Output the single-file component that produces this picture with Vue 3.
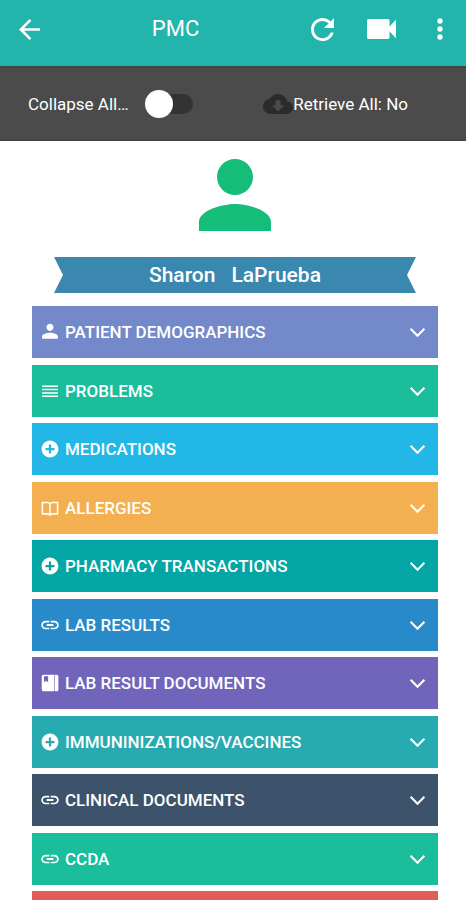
<template>
  <div class="page">
    <header class="app-bar">
      <button class="icon-button" type="button" aria-label="Back">
        <svg class="icon-nav" viewBox="4 4 16 16"><path d="M20 11H7.83l5.59-5.59L12 4l-8 8 8 8 1.41-1.41L7.83 13H20v-2z" /></svg>
      </button>
      <h1 class="app-title">PMC</h1>
      <div class="app-actions">
        <button class="icon-button" type="button" aria-label="Refresh">
          <svg class="icon-refresh" viewBox="4 4 16 16"><path d="M17.65 6.35C16.2 4.9 14.21 4 12 4c-4.42 0-7.99 3.58-7.99 8s3.57 8 7.99 8c3.73 0 6.84-2.55 7.73-6h-2.08c-.82 2.33-3.04 4-5.65 4-3.31 0-6-2.69-6-6s2.69-6 6-6c1.66 0 3.14.69 4.22 1.78L13 11h7V4l-2.35 2.35z" /></svg>
        </button>
        <button class="icon-button" type="button" aria-label="Video call">
          <svg class="icon-video" viewBox="3 6 18 12" preserveAspectRatio="none"><path d="M17 10.5V7c0-.55-.45-1-1-1H4c-.55 0-1 .45-1 1v10c0 .55.45 1 1 1h12c.55 0 1-.45 1-1v-3.500l4 4v-11l-4 4z" /></svg>
        </button>
        <button class="icon-button" type="button" aria-label="More options">
          <svg class="icon-more" viewBox="0 0 6 22"><circle cx="3" cy="3" r="2.700" /><circle cx="3" cy="11" r="2.700" /><circle cx="3" cy="19" r="2.700" /></svg>
        </button>
      </div>
    </header>

    <div class="tool-bar">
      <label class="collapse-toggle" for="collapse-all">
        <span>Collapse All…</span>
        <input id="collapse-all" v-model="collapsed" class="switch" type="checkbox" />
      </label>
      <button class="retrieve-button" type="button">
        <svg class="icon-cloud" viewBox="0 4 24 16"><path d="M19.350 10.040C18.670 6.590 15.640 4 12 4 9.110 4 6.600 5.640 5.350 8.040 2.340 8.360 0 10.910 0 14c0 3.310 2.690 6 6 6h13c2.760 0 5-2.240 5-5 0-2.640-2.050-4.780-4.650-4.960z" /><path class="cloud-arrow" d="M17 13l-5 5-5-5h3V9h4v4h3z" /></svg>
        <span>Retrieve All: No</span>
      </button>
    </div>

    <main class="content">
      <svg class="avatar" viewBox="4 4 16 16"><path d="M12 12c2.210 0 4-1.790 4-4s-1.790-4-4-4-4 1.790-4 4 1.790 4 4 4zm0 2c-2.670 0-8 1.340-8 4v2h16v-2c0-2.660-5.330-4-8-4z" /></svg>
      <h2 class="ribbon">
        <span>Sharon</span>
        <span>LaPrueba</span>
      </h2>

      <div class="sections">
        <button
          v-for="section in sections"
          :key="section.title"
          :class="['section', section.color]"
          :aria-label="section.title || 'More'"
          type="button"
        >
          <svg class="section-icon" viewBox="0 0 24 24"><path :d="icons[section.icon]" /></svg>
          <span class="section-title">{{ section.title }}</span>
          <svg class="chevron" viewBox="0 0 16 10"><path d="M1.500 1.500L8 8l6.500-6.500" /></svg>
        </button>
      </div>
    </main>
  </div>
</template>

<script setup>
import { ref } from 'vue'

const collapsed = ref(false)

const icons = {
  person: 'M12 10.500c2.600 0 4.700-2.100 4.700-4.700S14.600 1 12 1 7.300 3.200 7.300 5.800s2.100 4.700 4.700 4.700zm0 2.500c-3.700 0-10.500 1.600-10.500 5v3h21v-3c0-3.400-6.800-5-10.500-5z',
  lines: 'M1.500 4.500h21v2h-21zM1.500 9h21v2h-21zM1.500 13.500h21v2h-21zM1.500 18h21v2h-21z',
  plus: 'M12 .8C5.800.8.8 5.800.8 12s5 11.200 11.200 11.200 11.200-5 11.200-11.200S18.200.8 12 .8zm6 12.700h-4.500V18h-3v-4.500H6v-3h4.500V6h3v4.500H18v3z',
  book: 'M21.500 3.500h-7L12 5 9.500 3.500h-7C1.500 3.500.8 4.200.8 5.200v14c0 1 .7 1.700 1.700 1.700h7L12 22.500l2.500-1.600h7c1 0 1.700-.7 1.700-1.700v-14c0-1-.7-1.700-1.700-1.700zM11 19.500l-1.500-.7H2.900V5.500h6.300L11 6.700v12.800zm10.100-.7h-6.600l-1.500.7V6.700l1.800-1.200h6.300v13.300z',
  link: 'M2.600 12c0-2 1.600-3.500 3.600-3.500H11V6.200H6.200C3 6.200.3 8.800.3 12S3 17.800 6.200 17.800H11v-2.300H6.200c-2 0-3.600-1.500-3.600-3.500zM7.500 13.200h9v-2.400h-9v2.400zM17.800 6.200H13v2.300h4.800c2 0 3.600 1.500 3.600 3.500s-1.600 3.500-3.600 3.500H13v2.300h4.800c3.200 0 5.900-2.600 5.900-5.800s-2.700-5.800-5.900-5.800z',
  album: 'M3.500 1h14v22h-14C2 23 1 22 1 20.500v-17C1 2 2 1 3.500 1zM4 3v8l2.800-2 2.700 2V3H4zM18.300 1h2.400c1.500 0 2.500 1 2.500 2.500v17c0 1.500-1 2.500-2.500 2.500h-2.400V1z'
}

const sections = [
  { title: 'PATIENT DEMOGRAPHICS', icon: 'person', color: 'periwinkle' },
  { title: 'PROBLEMS', icon: 'lines', color: 'green' },
  { title: 'MEDICATIONS', icon: 'plus', color: 'sky' },
  { title: 'ALLERGIES', icon: 'book', color: 'orange' },
  { title: 'PHARMACY TRANSACTIONS', icon: 'plus', color: 'teal' },
  { title: 'LAB RESULTS', icon: 'link', color: 'blue' },
  { title: 'LAB RESULT DOCUMENTS', icon: 'album', color: 'purple' },
  { title: 'IMMUNINIZATIONS/VACCINES', icon: 'plus', color: 'aqua' },
  { title: 'CLINICAL DOCUMENTS', icon: 'link', color: 'navy' },
  { title: 'CCDA', icon: 'link', color: 'green' },
  { title: '', icon: 'link', color: 'red' }
]
</script>

<style>
body {
  margin: 0;
  background: #fff;
}
</style>

<style scoped>
.page {
  font-family: Roboto, "Liberation Sans", sans-serif;
  color: #fff;
}

button {
  border: 0;
  padding: 0;
  background: none;
  color: inherit;
  font: inherit;
  cursor: pointer;
}

svg {
  display: block;
  flex: none;
  fill: currentColor;
}

.app-bar {
  display: flex;
  align-items: center;
  height: 66px;
  padding: 0 11px 8px 14px;
  box-sizing: border-box;
  background: #22b5ac;
}

.app-title {
  margin: 0 auto;
  font-size: 22px;
  font-weight: 400;
  line-height: 28px;
}

.app-actions {
  display: flex;
  align-items: center;
  gap: 29px;
}

.icon-button {
  display: flex;
  align-items: center;
  justify-content: center;
  width: 30px;
  height: 30px;
}

.icon-nav {
  width: 21px;
  height: 21px;
}

.icon-refresh {
  width: 23px;
  height: 23px;
}

.icon-video {
  width: 29px;
  height: 20px;
}

.icon-more {
  width: 6px;
  height: 22px;
}

.tool-bar {
  display: flex;
  align-items: center;
  justify-content: space-between;
  height: 75px;
  padding: 0 58px 0 28px;
  box-sizing: border-box;
  border-top: 2px solid #444;
  border-bottom: 2px solid #444;
  background: #4b4b4b;
  font-size: 17px;
  line-height: 20px;
}

.collapse-toggle {
  display: flex;
  align-items: center;
  gap: 16px;
}

.switch {
  appearance: none;
  position: relative;
  width: 48px;
  height: 20px;
  margin: 0;
  border-radius: 10px;
  background: #333;
}

.switch::before {
  content: "";
  position: absolute;
  top: -4px;
  left: 0;
  width: 28px;
  height: 28px;
  border-radius: 50%;
  background: #fff;
}

.switch:checked::before {
  left: 20px;
}

.retrieve-button {
  display: flex;
  align-items: center;
}

.icon-cloud {
  width: 30px;
  height: 20px;
  color: #2b2b2b;
}

.cloud-arrow {
  fill: #4b4b4b;
}

.content {
  display: flex;
  flex-direction: column;
  align-items: center;
  padding: 18px 28px 20px 32px;
}

.avatar {
  width: 72px;
  height: 72px;
  color: #14bd7a;
}

.ribbon {
  display: flex;
  justify-content: center;
  gap: 16px;
  align-self: stretch;
  margin: 26px 22px 13px;
  padding: 6px 0;
  background: #3a88b0;
  clip-path: polygon(0 0, 100% 0, calc(100% - 9px) 50%, 100% 100%, 0 100%, 9px 50%);
  font-size: 21px;
  font-weight: 500;
  line-height: 24px;
}

.sections {
  display: flex;
  flex-direction: column;
  align-self: stretch;
}

.section {
  display: flex;
  align-items: center;
  gap: 6px;
  min-height: 52px;
  margin-bottom: 7px;
  padding: 0 12px 0 9px;
  font-size: 17px;
  font-weight: 500;
  line-height: 20px;
  text-align: left;
}

.section:nth-child(even) {
  margin-bottom: 6px;
}

.section-icon {
  width: 18px;
  height: 18px;
}

.section-title {
  flex: 1;
}

.chevron {
  width: 17px;
  height: 11px;
  fill: none;
  stroke: currentColor;
  stroke-width: 2;
}

.periwinkle {
  background: #7389c9;
}

.green {
  background: #1abd9c;
}

.sky {
  background: #22b7e6;
}

.orange {
  background: #f3af50;
}

.teal {
  background: #04a5a5;
}

.blue {
  background: #298ac9;
}

.purple {
  background: #7165bb;
}

.aqua {
  background: #28abb0;
}

.navy {
  background: #3d526b;
}

.red {
  background: #e35d57;
}
</style>
